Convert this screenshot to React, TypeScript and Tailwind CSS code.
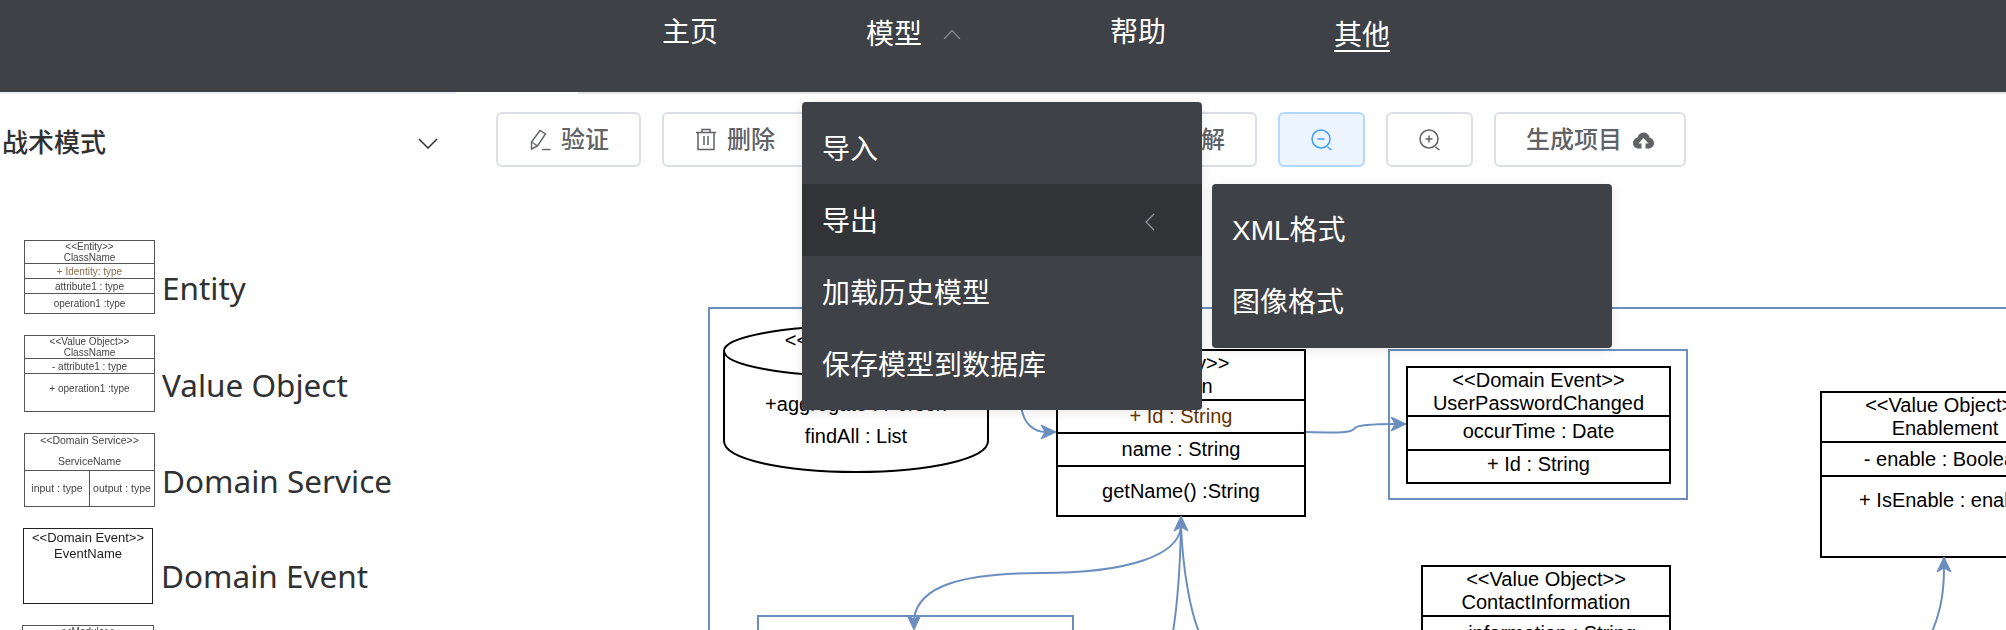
import type { ReactNode } from "react";

const navChevron = (
  <svg width="20" height="11" viewBox="0 0 20 11" fill="none" stroke="#85888b" strokeWidth="1.3">
    <path d="M2 10 L10 1.5 L18 10" />
  </svg>
);

function PencilIcon() {
  return (
    <svg width="24" height="24" viewBox="0 0 24 24" fill="none" stroke="#606266" strokeWidth="1.4">
      <path d="M3.5 14 L12 2.5 L17.5 6 L9.5 18 L3.5 21 Z" />
      <path d="M4.5 14.5 L9.5 18" />
      <path d="M14 21.5 H22.5" />
    </svg>
  );
}

function TrashIcon() {
  return (
    <svg width="24" height="24" viewBox="0 0 24 24" fill="none" stroke="#606266" strokeWidth="1.5">
      <path d="M2 4.5 H22" />
      <path d="M8 4.5 V1.5 H16 V4.5" />
      <path d="M4 4.5 V21.5 H20 V4.5" />
      <path d="M10 8 V17 M14 8 V17" />
    </svg>
  );
}

function ZoomIcon({ color, plus }: { color: string; plus?: boolean }) {
  return (
    <svg width="24" height="24" viewBox="0 0 24 24" fill="none" stroke={color} strokeWidth="1.5">
      <circle cx="11" cy="11" r="9" />
      <path d="M17.5 19 L21.5 22" />
      <path d="M7.5 11 H14.5" />
      {plus && <path d="M11 7.5 V14.5" />}
    </svg>
  );
}

function CloudIcon() {
  return (
    <svg width="24" height="24" viewBox="0 0 24 24" fill="#606266">
      <path d="M11.5 20.5 H8.5 C5.5 20.5 3 18.2 3 15 C3 12.2 5 10 7.3 9.7 C8.3 6.6 10.6 4.5 13.5 4.5 C16.5 4.5 19 6.6 19.6 9.7 C22 10 24 12.3 24 15 C24 18.2 21.5 20.5 18.5 20.5 H15.5 V15.5 H18.5 L13.5 10 L8.5 15.5 H11.5 Z" />
    </svg>
  );
}

function ToolButton({
  children,
  active,
  className = "",
}: {
  children: ReactNode;
  active?: boolean;
  className?: string;
}) {
  const tone = active ? "border-[#b3d8ff] bg-[#ecf5ff]" : "border-[#dcdfe6] bg-white";
  return (
    <button
      type="button"
      className={`flex h-[55px] items-center rounded-[6px] border-2 text-[24px] font-medium text-[#606266] ${tone} ${className}`}
    >
      {children}
    </button>
  );
}

// small previews in the palette, the original ones are slightly blurry pictures
function PreviewRow({ children, className = "" }: { children: ReactNode; className?: string }) {
  return <div className={`flex items-center justify-center border-t border-[#555] ${className}`}>{children}</div>;
}

function PaletteLabel({ children, className = "" }: { children: ReactNode; className?: string }) {
  return (
    <span className={`font-['Noto_Sans',sans-serif] text-[31.5px] leading-[36px] text-[#303133] ${className}`}>
      {children}
    </span>
  );
}

function Palette() {
  return (
    <div className="ml-[24px] flex flex-col gap-[21px]">
      <div className="flex items-end gap-[7px]">
        <div className="flex h-[74px] w-[131px] flex-col border border-[#555] text-center text-[10px] leading-[11px] text-[#444] blur-[0.3px]">
          <div className="h-[22px]">
            &lt;&lt;Entity&gt;&gt;
            <br />
            ClassName
          </div>
          <PreviewRow className="h-[15px] text-[#8a6d4d]">+ Identity: type</PreviewRow>
          <PreviewRow className="h-[15px]">attribute1 : type</PreviewRow>
          <PreviewRow className="flex-1">operation1 :type</PreviewRow>
        </div>
        <PaletteLabel className="mb-[8px]">Entity</PaletteLabel>
      </div>
      <div className="flex items-end gap-[7px]">
        <div className="flex h-[77px] w-[131px] flex-col border border-[#555] text-center text-[10px] leading-[11px] text-[#444] blur-[0.3px]">
          <div className="h-[22px]">
            &lt;&lt;Value Object&gt;&gt;
            <br />
            ClassName
          </div>
          <PreviewRow className="h-[15px]">- attribute1 : type</PreviewRow>
          <div className="flex-1 border-t border-[#555] pt-[9px]">+ operation1 :type</div>
        </div>
        <PaletteLabel className="mb-[9px]">Value Object</PaletteLabel>
      </div>
      <div className="flex items-end gap-[7px]">
        <div className="flex h-[74px] w-[131px] flex-col border border-[#555] text-center text-[10.5px] leading-[11px] text-[#444] blur-[0.3px]">
          <div className="h-[36px] leading-[21px]">
            <div className="-mt-[4px]">
              &lt;&lt;Domain Service&gt;&gt;
              <br />
              ServiceName
            </div>
          </div>
          <div className="flex flex-1 border-t border-[#555]">
            <div className="flex w-[65px] items-center justify-center border-r border-[#555]">input : type</div>
            <div className="flex flex-1 items-center justify-center">output : type</div>
          </div>
        </div>
        <PaletteLabel className="mb-[8px]">Domain Service</PaletteLabel>
      </div>
      <div className="flex items-end gap-[8px]">
        <div className="-ml-px h-[76px] w-[130px] border border-[#222] pt-[1px] text-center text-[13px] leading-[16px] text-[#222] blur-[0.2px]">
          &lt;&lt;Domain Event&gt;&gt;
          <br />
          EventName
        </div>
        <PaletteLabel className="mb-[10px]">Domain Event</PaletteLabel>
      </div>
      <div className="-ml-[2px] h-[74px] w-[132px] border border-[#555] text-center text-[10px] leading-[11px] text-[#444] blur-[0.3px]">
        &lt;&lt;Module&gt;&gt;
      </div>
    </div>
  );
}

function UmlBox({ className, children }: { className: string; children: ReactNode }) {
  return (
    <div className={`absolute flex flex-col border-2 border-black bg-white text-center text-[20px] leading-[23px] text-black ${className}`}>
      {children}
    </div>
  );
}

function UmlRow({ className = "", children }: { className?: string; children: ReactNode }) {
  return <div className={`flex flex-col items-center justify-center border-t-2 border-black ${className}`}>{children}</div>;
}

function Arrow({ points }: { points: string }) {
  return <polygon points={points} fill="#6c8ebf" stroke="#6c8ebf" strokeWidth="1" />;
}

function Canvas() {
  return (
    <div className="relative flex-1 overflow-hidden">
      {/* bounded context */}
      <div className="absolute left-[252px] top-[117px] h-[600px] w-[1400px] border-2 border-[#6c8ebf]" />

      {/* repository */}
      <div className="absolute left-[267px] top-[135px] h-[150px] w-[266px] pt-[4px] text-center text-[20px] leading-[23px] text-black">
        <svg width="266" height="150" viewBox="0 0 266 150" fill="white" stroke="black" strokeWidth="2" className="absolute left-0 top-0">
          <path d="M1 26 C1 12 60 1 133 1 C206 1 265 12 265 26 V116 C265 134 206 147 133 147 C60 147 1 134 1 116 Z" />
          <path d="M1 26 C1 40 60 51 133 51 C206 51 265 40 265 26" fill="none" />
        </svg>
        <div className="relative">&lt;&lt;Repository&gt;&gt;</div>
        <div className="relative mt-[41px]">+aggregate : Person</div>
        <div className="relative mt-[9px]">findAll : List</div>
      </div>

      <UmlBox className="left-[600px] top-[159px] h-[168px] w-[250px]">
        <div className="flex h-[48px] flex-col items-center justify-center">
          <span>&lt;&lt;Entity&gt;&gt;</span>
          <span>Person</span>
        </div>
        <UmlRow className="h-[33px] text-[#663300]">+ Id : String</UmlRow>
        <UmlRow className="h-[33px]">name : String</UmlRow>
        <UmlRow className="flex-1">getName() :String</UmlRow>
      </UmlBox>

      <div className="absolute left-[932px] top-[159px] h-[151px] w-[300px] border-2 border-[#6c8ebf]" />
      <UmlBox className="left-[950px] top-[176px] h-[118px] w-[265px]">
        <div className="flex h-[47px] flex-col items-center justify-center">
          <span>&lt;&lt;Domain Event&gt;&gt;</span>
          <span>UserPasswordChanged</span>
        </div>
        <UmlRow className="h-[34px] pb-[4px]">occurTime : Date</UmlRow>
        <UmlRow className="flex-1 pb-[4px]">+ Id : String</UmlRow>
      </UmlBox>

      <UmlBox className="left-[1364px] top-[201px] h-[167px] w-[250px]">
        <div className="flex h-[48px] flex-col items-center justify-center">
          <span>&lt;&lt;Value Object&gt;&gt;</span>
          <span>Enablement</span>
        </div>
        <UmlRow className="h-[34px]">- enable : Boolean</UmlRow>
        <div className="flex-1 border-t-2 border-black pt-[12px]">+ IsEnable : enable</div>
      </UmlBox>

      <UmlBox className="left-[965px] top-[375px] h-[120px] w-[250px]">
        <div className="flex h-[48px] flex-col items-center justify-center">
          <span>&lt;&lt;Value Object&gt;&gt;</span>
          <span>ContactInformation</span>
        </div>
        <UmlRow className="h-[34px]">- information : String</UmlRow>
      </UmlBox>

      <div className="absolute left-[301px] top-[425px] h-[200px] w-[317px] border-2 border-[#6c8ebf]" />

      {/* connectors, drawn in page coordinates */}
      <svg width="1550" height="440" className="absolute left-0 top-0" fill="none" stroke="#6c8ebf" strokeWidth="2">
        <g transform="translate(-456,-190)">
          <path d="M1021 405 C1023 425 1035 432 1046 432" />
          <Arrow points="1056,432 1041,439 1045,432 1041,425" />
          <path d="M1306 432 C1340 433 1352 433 1355 428 C1357 425 1375 424 1396 424" />
          <Arrow points="1406,424 1391,431 1395,424 1391,417" />
          <path d="M1181 527 C1178 555 1130 573 1040 573 C965 573 918 585 914 619" />
          <path d="M1181 527 C1180 570 1178 600 1173 632" />
          <path d="M1181 527 C1183 570 1190 610 1199 632" />
          <Arrow points="1181,516 1188,531 1181,527 1174,531" />
          <Arrow points="914,630 907,615 914,619 921,615" />
          <path d="M1944 568 C1944 595 1940 612 1932 632" />
          <Arrow points="1944,557 1951,572 1944,568 1937,572" />
        </g>
      </svg>
    </div>
  );
}

export default function App() {
  return (
    <div className="relative flex h-[630px] w-[2006px] flex-col overflow-hidden bg-white font-['Liberation_Sans','Noto_Sans_CJK_SC',sans-serif]">
      <header className="flex h-[92px] shrink-0 items-start bg-[#3e4145] pl-[662px] pt-[15px] text-[28px] leading-[36px] text-white">
        <div className="flex gap-[148px]">
          <a>主页</a>
          <a className="flex items-center gap-[20px]">
            模型
            {navChevron}
          </a>
          <a>帮助</a>
          <a className="ml-[20px] mt-[3px] underline underline-offset-[5px]">其他</a>
        </div>
      </header>
      <div className="flex h-[2px] shrink-0">
        <div className="w-[456px] bg-[#ebeef5]" />
        <div className="w-[122px]" />
        <div className="flex-1 bg-[#e6e6e6]" />
      </div>

      <div className="flex min-h-0 flex-1">
        <aside className="w-[456px] shrink-0">
          <div className="flex h-[98px] items-center justify-between pl-[2px] pr-[18px]">
            <span className="text-[26px] font-medium text-[#303133]">战术模式</span>
            <svg width="20" height="11" viewBox="0 0 20 11" fill="none" stroke="#303133" strokeWidth="1.5">
              <path d="M1 1 L10 10 L19 1" />
            </svg>
          </div>
          <div className="pt-[48px]">
            <Palette />
          </div>
        </aside>

        <main className="flex min-w-0 flex-1 flex-col">
          <div className="flex h-[96px] shrink-0 gap-[21px] pl-[40px] pt-[18px]">
            <ToolButton className="gap-[9px] px-[30px]">
              <PencilIcon />
              验证
            </ToolButton>
            <ToolButton className="gap-[9px] px-[30px]">
              <TrashIcon />
              删除
            </ToolButton>
            <ToolButton className="w-[429px] justify-end px-[30px]">图解</ToolButton>
            <ToolButton active className="w-[87px] justify-center">
              <ZoomIcon color="#409eff" />
            </ToolButton>
            <ToolButton className="w-[87px] justify-center">
              <ZoomIcon color="#606266" plus />
            </ToolButton>
            <ToolButton className="gap-[8px] px-[30px]">
              生成项目
              <CloudIcon />
            </ToolButton>
          </div>
          <Canvas />
        </main>
      </div>

      {/* model dropdown */}
      <div className="absolute left-[802px] top-[102px] w-[400px] rounded-[4px] bg-[#3e4145] py-[10px] text-[28px] text-white shadow-[0_2px_12px_rgba(0,0,0,0.1)]">
        <div className="flex h-[72px] items-center px-[20px] pt-[3px]">导入</div>
        <div className="flex h-[72px] items-center justify-between bg-[#323336] pl-[20px] pr-[47px] pt-[3px]">
          导出
          <svg width="11" height="18" viewBox="0 0 11 18" fill="none" stroke="#909399" strokeWidth="1.3">
            <path d="M10 1 L2 9 L10 17" />
          </svg>
        </div>
        <div className="flex h-[72px] items-center px-[20px] pt-[3px]">加载历史模型</div>
        <div className="flex h-[72px] items-center px-[20px] pt-[3px]">保存模型到数据库</div>
      </div>

      {/* export submenu */}
      <div className="absolute left-[1212px] top-[184px] w-[400px] rounded-[4px] bg-[#3e4145] py-[10px] text-[28px] text-white shadow-[0_2px_12px_rgba(0,0,0,0.1)]">
        <div className="flex h-[72px] items-center px-[20px] pt-[2px]">XML格式</div>
        <div className="flex h-[72px] items-center px-[20px] pt-[2px]">图像格式</div>
      </div>
    </div>
  );
}
